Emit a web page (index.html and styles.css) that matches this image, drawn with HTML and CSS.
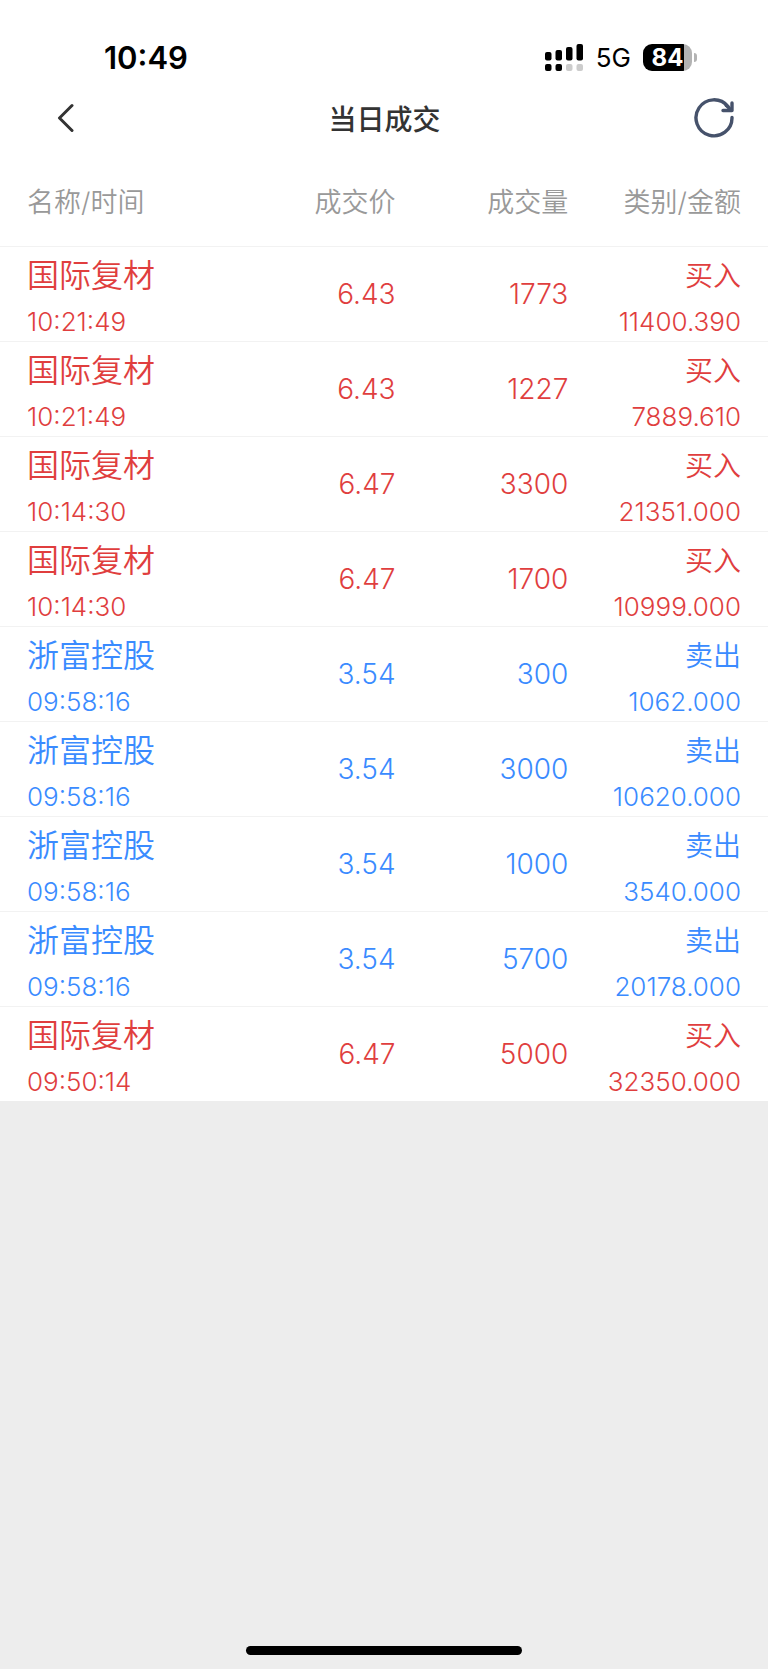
FILE: index.html
```html
<!DOCTYPE html>
<html lang="zh-CN">
<head>
  <meta charset="UTF-8">
  <meta name="viewport" content="width=device-width, initial-scale=1">
  <title>当日成交</title>
  <link rel="stylesheet" href="styles.css">
</head>
<body>
  <!-- Status bar -->
  <div class="status-bar">
    <span class="clock">10:49</span>
    <div class="status-icons">
      <svg class="signal" width="38" height="27" viewBox="0 0 38 27">
        <rect x="0" y="8" width="6.5" height="8.5" rx="2"/>
        <rect x="10.5" y="6" width="6.5" height="10.5" rx="2"/>
        <rect x="21" y="3" width="6.5" height="13.5" rx="2"/>
        <rect x="31.5" y="0" width="6.5" height="16.5" rx="2"/>
        <rect x="0" y="20" width="6.5" height="7" rx="2"/>
        <rect x="10.5" y="20" width="6.5" height="7" rx="2"/>
        <rect class="off" x="21" y="20" width="6.5" height="7" rx="2"/>
        <rect class="off" x="31.5" y="20" width="6.5" height="7" rx="2"/>
      </svg>
      <span class="network">5G</span>
      <span class="battery"><span class="battery-level">84</span></span>
    </div>
  </div>

  <!-- Title bar -->
  <header class="nav-bar">
    <button class="nav-button" aria-label="返回">
      <svg width="18" height="30" viewBox="0 0 18 30">
        <path d="M16 2.5 L3.5 15 L16 27.5" fill="none" stroke="#333" stroke-width="3" stroke-linecap="round" stroke-linejoin="round"/>
      </svg>
    </button>
    <h1>当日成交</h1>
    <button class="nav-button refresh" aria-label="刷新">
      <svg width="42" height="42" viewBox="0 0 42 42">
        <g fill="none" stroke="#46526b" stroke-width="3.4" stroke-linecap="round" stroke-linejoin="round">
          <path d="M39 20.5 A18 18 0 1 1 35 9.5"/>
          <path d="M39 6 V13.5 H30"/>
          <path d="M33 8 L38 13"/>
        </g>
      </svg>
    </button>
  </header>

  <!-- Trades -->
  <table class="trades">
    <thead>
      <tr>
        <th class="col-name">名称/时间</th>
        <th class="col-price">成交价</th>
        <th class="col-volume">成交量</th>
        <th class="col-amount">类别/金额</th>
      </tr>
    </thead>
    <tbody>
      <tr class="buy">
        <td><div class="main">国际复材</div><div class="sub">10:21:49</div></td>
        <td class="number">6.43</td>
        <td class="number">1773</td>
        <td><div class="side">买入</div><div class="sub">11400.390</div></td>
      </tr>
      <tr class="buy">
        <td><div class="main">国际复材</div><div class="sub">10:21:49</div></td>
        <td class="number">6.43</td>
        <td class="number">1227</td>
        <td><div class="side">买入</div><div class="sub">7889.610</div></td>
      </tr>
      <tr class="buy">
        <td><div class="main">国际复材</div><div class="sub">10:14:30</div></td>
        <td class="number">6.47</td>
        <td class="number">3300</td>
        <td><div class="side">买入</div><div class="sub">21351.000</div></td>
      </tr>
      <tr class="buy">
        <td><div class="main">国际复材</div><div class="sub">10:14:30</div></td>
        <td class="number">6.47</td>
        <td class="number">1700</td>
        <td><div class="side">买入</div><div class="sub">10999.000</div></td>
      </tr>
      <tr class="sell">
        <td><div class="main">浙富控股</div><div class="sub">09:58:16</div></td>
        <td class="number">3.54</td>
        <td class="number">300</td>
        <td><div class="side">卖出</div><div class="sub">1062.000</div></td>
      </tr>
      <tr class="sell">
        <td><div class="main">浙富控股</div><div class="sub">09:58:16</div></td>
        <td class="number">3.54</td>
        <td class="number">3000</td>
        <td><div class="side">卖出</div><div class="sub">10620.000</div></td>
      </tr>
      <tr class="sell">
        <td><div class="main">浙富控股</div><div class="sub">09:58:16</div></td>
        <td class="number">3.54</td>
        <td class="number">1000</td>
        <td><div class="side">卖出</div><div class="sub">3540.000</div></td>
      </tr>
      <tr class="sell">
        <td><div class="main">浙富控股</div><div class="sub">09:58:16</div></td>
        <td class="number">3.54</td>
        <td class="number">5700</td>
        <td><div class="side">卖出</div><div class="sub">20178.000</div></td>
      </tr>
      <tr class="buy">
        <td><div class="main">国际复材</div><div class="sub">09:50:14</div></td>
        <td class="number">6.47</td>
        <td class="number">5000</td>
        <td><div class="side">买入</div><div class="sub">32350.000</div></td>
      </tr>
    </tbody>
  </table>

  <div class="home-indicator"></div>
</body>
</html>
```

FILE: styles.css
```css
* {
  box-sizing: border-box;
}

body {
  margin: 0;
  min-height: 100vh;
  display: flex;
  flex-direction: column;
  background: #ededed;
  font-family: Inter, "Noto Sans CJK SC", sans-serif;
}

/* Status bar */
.status-bar {
  display: flex;
  justify-content: space-between;
  align-items: center;
  height: 84px;
  padding: 30px 70px 0 104px;
  background: #fff;
}

.clock {
  font-size: 31px;
  font-weight: 600;
}

.status-icons {
  display: flex;
  align-items: center;
}

.signal .off {
  fill: #ccc;
}

.network {
  margin: 2px 12px 0 13px;
  font-size: 26px;
  line-height: 28px;
}

.battery {
  position: relative;
  width: 49px;
  height: 27px;
  margin-right: 6px;
  border-radius: 9px;
  background: linear-gradient(to right, #000 84%, #b3b3b3 84%);
}

.battery::after {
  content: "";
  position: absolute;
  right: -5px;
  top: 9px;
  width: 3px;
  height: 9px;
  border-radius: 0 4px 4px 0;
  background: #b3b3b3;
}

.battery-level {
  display: block;
  color: #fff;
  font-size: 24px;
  font-weight: 700;
  line-height: 27px;
  text-align: center;
}

/* Title bar */
.nav-bar {
  display: flex;
  justify-content: space-between;
  align-items: center;
  height: 68px;
  padding: 0 33px 0 34px;
  background: #fff;
}

.nav-bar h1 {
  margin: 0;
  color: #333;
  font-size: 28px;
  font-weight: 500;
}

.nav-button {
  display: flex;
  justify-content: center;
  align-items: center;
  width: 62px;
  height: 62px;
  padding: 0;
  border: none;
  background: none;
}

.refresh {
  justify-content: flex-end;
}

/* Trades */
.trades {
  width: 100%;
  table-layout: fixed;
  border-collapse: separate;
  border-spacing: 0;
  background: #fff;
}

.trades th {
  height: 94px;
  padding: 7px 0 0;
  color: #999;
  font-size: 27px;
  font-weight: 350;
  line-height: 40px;
  text-align: right;
}

.trades td {
  padding: 7px 0 1px;
  border-top: 1px solid #f2f2f2;
  font-weight: 350;
  text-align: right;
}

.trades .number {
  padding: 0;
  font-size: 28px;
}

.trades th:first-child,
.trades td:first-child {
  padding-left: 27px;
  text-align: left;
}

.trades th:last-child,
.trades td:last-child {
  padding-right: 27px;
}

.col-name {
  width: 25%;
}

.col-price {
  width: 26.5%;
}

.col-volume {
  width: 22.5%;
}

.col-amount {
  width: 26%;
}

.buy {
  color: #e03e3e;
}

.sell {
  color: #3a8bff;
}

.main {
  font-size: 32px;
  line-height: 44px;
}

.side {
  font-size: 28px;
  line-height: 44px;
}

.sub {
  margin-top: 6px;
  font-size: 26px;
  line-height: 36px;
}

.home-indicator {
  width: 36%;
  height: 9px;
  margin: auto auto 14px;
  border-radius: 5px;
  background: #000;
}
```
